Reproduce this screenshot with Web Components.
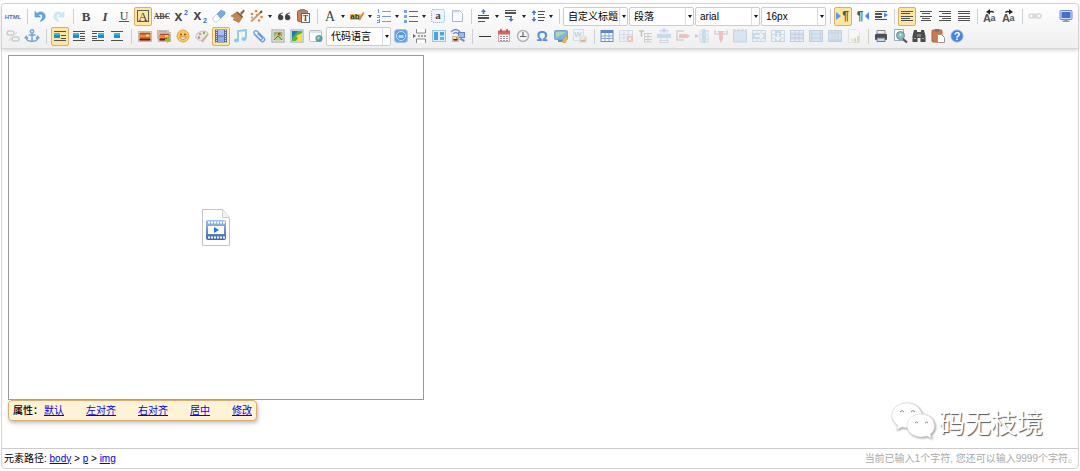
<!DOCTYPE html>
<html lang="zh">
<head>
<meta charset="utf-8">
<title>Editor</title>
<style>
html,body{margin:0;height:100%}
body{font:10px/16px "Liberation Sans","Noto Sans CJK SC",sans-serif;color:#000;background:#fff}
</style>
</head>
<body>
<rich-editor></rich-editor>
<script>
const T=(x,y,s,t,extra='')=>`<text x="${x}" y="${y}" font-size="${s}" ${extra}>${t}</text>`;
const SERIF='font-family="Liberation Serif" text-anchor="middle" fill="#444"';
const L=(rows,c='#505050')=>rows.map(([x,y,w,h=1])=>`<rect x="${x}" y="${y}" width="${w}" height="${h}" fill="${c}"/>`).join('');
const pic=(x,y,w=6,h=5)=>`<rect x="${x}" y="${y}" width="${w}" height="${h}" fill="#1590d8"/><rect x="${x}" y="${y}" width="${w}" height="2" fill="#3db4f0"/>`;
const photo=(x,y,w,h)=>`<rect x="${x+.5}" y="${y+.5}" width="${w-1}" height="${h-1}" fill="#fff" stroke="#c4bab6"/><rect x="${x+1.5}" y="${y+1.5}" width="${w-3}" height="${h-3}" fill="#b8481a"/><rect x="${x+1.5}" y="${y+h/2-2}" width="${w-3}" height="3" fill="#f58a2a"/><rect x="${x+w-6}" y="${y+h/2-2}" width="3" height="2" fill="#ffe08a"/><rect x="${x+1.5}" y="${y+h-3}" width="${w-3}" height="1.5" fill="#5c2413"/>`;
const up=(x,y)=>`<path d="M${x} ${y}l2.500 3h-1.700v2h-1.600v-2h-1.700z" fill="#4a78c8"/>`;
const down=(x,y)=>`<path d="M${x} ${y+5}l2.500-3h-1.700v-2h-1.600v2h-1.700z" fill="#4a78c8"/>`;
const grid=(hl='',c='#7fa6dc')=>`<rect x="1.5" y="2.5" width="13" height="11" fill="#e8f1fc" stroke="${c}"/>${hl}<path d="M2 6.5h12M2 10h12M6 3v10M10 3v10" stroke="${c}" fill="none"/>`;
const chain='<rect x="2" y="6" width="6" height="4" rx="2" fill="none" stroke="#888" stroke-width="1.500"/><rect x="8" y="6" width="6" height="4" rx="2" fill="none" stroke="#888" stroke-width="1.500"/><path d="M5 8h6" stroke="#888" stroke-width="1.500"/>';
const SANS='font-weight="bold" font-family="Liberation Sans" text-anchor="middle"';
const ICONS={
html:T(8,10.5,6,'HTML',SANS+' fill="#3f78b4"'),
undo:'<path d="M3 3.500v5.500h5.500L6.300 7C8 5.500 10.500 6 10.500 8.500c0 1.800-.8 3.200-2.300 4.700 3.600-.6 5.600-3.200 4.800-6.200C12 3.500 7.500 3 4.900 5.500z" fill="#5fa8e8" stroke="#3f88d4" stroke-width=".6"/>',
redo:'<path d="M13 3.500v5.500H7.500L9.700 7C8 5.500 5.500 6 5.500 8.500c0 1.800.8 3.200 2.300 4.700C4.200 12.600 2.200 10 3 7 4 3.500 8.500 3 11.100 5.500z" fill="#6fc0f0" stroke="#3fa0d4" stroke-width=".6"/>',
bold:T(8,12.5,13,'B',SERIF+' font-weight="bold"'),
italic:T(8,12.5,13,'I',SERIF+' font-weight="bold" font-style="italic"'),
underline:T(8,11.5,12,'U',SERIF)+L([[3,13,10]]),
box:'<rect x="2.500" y="2.500" width="11" height="11" fill="none" stroke="#59615c"/>'+T(8,12.5,13,'A',SERIF),
strike:T(8,11,8,'ABC',SERIF+' font-weight="bold"')+L([[1,8,14]]),
sup:T(5.5,13,14,'x',SANS+' fill="#444"')+T(13,7,7,'2',SANS+' fill="#3a69e0"'),
sub:T(5.5,12,14,'x',SANS+' fill="#444"')+T(13,15,7,'2',SANS+' fill="#3a69e0"'),
eraser:'<path d="M2 10L10 2l4 2v2L6 14H4l-2-2z" fill="#fff" stroke="#b7bec8" stroke-width=".7"/><path d="M6 6l4-4 4 2v2l-4.500 4.500z" fill="#78aae8" stroke="#6a94cc" stroke-width=".5"/>',
brush:'<path d="M10 5l3.500-3.500 1.500 1.500L11.500 7z" fill="#9a6a3e"/><path d="M1 8l6-4 5.500 5L9 14.500 3 11.500l2-1.500z" fill="#c08850" stroke="#a8703c" stroke-width=".7"/><path d="M7 4l5.500 5" stroke="#7e5429" stroke-width="1.500"/>',
wand:'<path d="M2 13.500L11 5" stroke="#cba070" stroke-width="2"/><path d="M11 5l2-2" stroke="#7a4d28" stroke-width="2"/><g fill="#f57a32"><circle cx="3" cy="6" r="1.300"/><circle cx="7" cy="3" r="1.300"/><circle cx="8" cy="7" r="1"/><circle cx="12.500" cy="9" r="1.300"/><circle cx="10" cy="12.500" r="1.200"/><circle cx="3" cy="9.500" r="1"/></g>',
quote:'<path d="M7 4.500C3 5 2 7 2 9.500a2.700 2.700 0 1 0 2.500-2.700C4.800 6 5.500 5.500 7 5.200zM14 4.500c-4 .5-5 2.500-5 5a2.700 2.700 0 1 0 2.500-2.700c.3-.8 1-1.300 2.500-1.600z" fill="#444"/>',
paste:'<rect x="2.500" y="2.500" width="10" height="11" rx="1" fill="#c8805a" stroke="#a86848"/><rect x="5" y="1" width="5" height="3" fill="#888"/><rect x="6.500" y="5.500" width="8" height="9" fill="#fff" stroke="#667"/>'+T(10.5,13,8,'T',SERIF+' font-weight="bold"'),
color:T(8,13,14,'A',SERIF),
mark:'<rect x="1" y="6" width="11" height="6" fill="#f9be60"/>'+T(6,11,8,'ab',SANS+' fill="#333"')+'<path d="M9 12l5-8 1.500 1-4.500 7.500z" fill="#c98a4b"/>',
ol:L([[6,3,9],[6,8,9],[6,13,9]],'#7a9ae0')+L([[2,1,1,4],[1,7,3],[1,9,3],[3,7,1,3],[1,12,3],[3,11,1,4],[1,14,3]],'#6f96e8'),
ul:L([[6,3,9],[6,8,9],[6,13,9]],'#666')+L([[1,2,3,3],[1,7,3,3],[1,12,3,3]],'#7c9fee'),
all:'<rect x="1.500" y="1.500" width="13" height="13" rx="2" fill="#edf4ff" stroke="#79a8ee" stroke-dasharray="1 1"/>'+T(8,11,11,'a',SERIF+' font-weight="bold"'),
page:'<path d="M3.500 2.500h7l3 3v8h-10z" fill="#fafcff" stroke="#aab8ca"/><path d="M3.500 2.500h7v2h-7z" fill="#ccd9e8"/>',
rowTop:up(7.5,1)+L([[2,7,11,1],[2,9,11,2],[2,13,7,1]]),
rowBot:L([[2,2,11,1],[2,4,11,2],[2,8,7,1]])+down(8,9),
line:up(4,2)+down(4,9)+L([[8,3,7],[8,6,6],[8,9,7],[8,12,6]]),
ltr:'<path d="M1 4l5 4-5 4z" fill="#5b98f0"/>'+T(10.5,12,12,'¶',SANS+' fill="#555"'),
rtl:'<path d="M15 4l-4 4 4 4z" fill="#4589f0"/>'+T(6,12,12,'¶',SANS+' fill="#555"'),
indent:L([[2,3,12],[2,5,7,2],[2,8,7,2],[2,11,12,1]])+'<path d="M11 7l-0-2.500 4 2.500-4 2.500z" fill="#4589f0"/>',
left:L([[2,3,12],[2,5,9],[2,8,12],[2,10,9],[2,12,12]]),
center:L([[2,3,12],[4,5,8],[2,8,12],[4,10,8],[3,12,10]]),
right:L([[2,3,12],[5,5,9],[2,8,12],[5,10,9],[2,12,12]]),
full:L([[2,3,12],[2,5,12],[2,8,12],[2,10,12],[2,12,12]]),
upper:T(5,14,11,'A',SANS+' fill="#555"')+T(11,13,9,'a',SANS+' fill="#555"')+'<path d="M4 4l4-3v2q4-1 4 2-2-1-4-.5v2z" fill="#222"/>',
lower:T(5,14,11,'A',SANS+' fill="#555"')+T(11,13,9,'a',SANS+' fill="#555"')+'<path d="M12 4L8 1v2q-4-1-4 2 2-1 4-.5v2z" fill="#222"/>',
link:chain,
unlink:'<rect x="2" y="3" width="7" height="4" rx="2" fill="none" stroke="#777" stroke-width="1.500"/><rect x="7" y="9" width="7" height="4" rx="2" fill="none" stroke="#777" stroke-width="1.500"/><path d="M4 13l2-4M10 7l2-3" stroke="#999"/>',
screen:'<rect x="2" y="2.500" width="12" height="9" rx="1" fill="#d8e4fa" stroke="#6c87c8"/><rect x="3.500" y="4" width="9" height="6" fill="#3f6ed4"/><path d="M6.500 11.500h3v1h2V14h-7v-1.500h2z" fill="#8d9bb8"/>',
anchor:'<g fill="none" stroke="#74a6d8" stroke-width="1.500"><circle cx="8" cy="3.500" r="1.700"/><path d="M8 5v9M4.500 7h7M2 9c.5 6 11.500 6 12 0M.8 10.500L2.200 8.500l1.800 2M12 10.500l1.800-2 1.500 2"/></g>',
imgL:L([[2,3,12],[9,7,5],[9,10,5],[2,12,12]])+pic(2,5,6,5),
imgWL:L([[2,3,12],[9,5,5],[9,8,5],[9,10,5],[2,12,12]])+pic(2,5),
imgWR:L([[2,3,12],[2,5,5],[2,8,5],[2,10,5],[2,12,12]])+pic(8,5),
imgC:L([[2,3,12],[2,12,12]])+pic(5,5,6,5),
image:photo(1,3,14,11),
images:photo(1,2,12,9)+photo(2,4,13,10)+'<path d="M9 11h2V9l4 3-4 3v-2H9z" fill="#7fcf1d"/>',
smile:'<circle cx="8" cy="8" r="6" fill="#ffc658" stroke="#eaa04a"/><circle cx="6" cy="6.500" r="1" fill="#8b4f13"/><circle cx="10" cy="6.500" r="1" fill="#8b4f13"/><path d="M4.500 9q3.500 5 7 0z" fill="#fff" stroke="#b67030" stroke-width=".7"/>',
palette:'<path d="M2 7C5 2 14 2 14 6c0 3-4 2-5 5s-6 1-7-1z" fill="#eee8dc" stroke="#c8beae"/><circle cx="6" cy="6" r="1.300" fill="#e79a5a"/><circle cx="10" cy="5" r="1.200" fill="#78b66f"/><circle cx="5" cy="9.500" r="1.200" fill="#7e98d6"/><path d="M8 14l6-8" stroke="#cdad7b" stroke-width="1.500"/>',
film:'<rect x="2" y="1.500" width="12" height="13" fill="#5a6aa0"/><rect x="5" y="2" width="6" height="5.500" fill="#a7bff2"/><rect x="5" y="8.500" width="6" height="5.500" fill="#8dabea"/><path d="M3.500 2v13M12.500 2v13" stroke="#dde" stroke-dasharray="1 1"/>',
music:'<path d="M6 12V3l8-1v8" fill="none" stroke="#8fc6ea" stroke-width="1.800"/><ellipse cx="4.500" cy="12.500" rx="2.500" ry="2" fill="#8ac9ee"/><ellipse cx="12" cy="11" rx="2.500" ry="2" fill="#8ac9ee"/>',
clip:'<path d="M3 6l7 7c2 2 5-1 3-3L6.500 3.500C4.500 1.500 1.500 4 3.500 6l5.500 5.500c1 1 3-.5 2-2L6.500 5.500" fill="none" stroke="#6c9ce6" stroke-width="1.300"/>',
map:'<rect x="2" y="2" width="12" height="12" fill="#fff" stroke="#999"/><rect x="3.500" y="3.500" width="9" height="9" fill="#8fb46c"/><path d="M4 9l4-5 5 6v2H4z" fill="#c5c985"/><circle cx="9" cy="6" r="1.500" fill="#d44030"/><path d="M4 12l4-4 4 4" stroke="#3f7f55" fill="none"/>',
gmap:'<rect x="2" y="2" width="12" height="12" fill="#fff" stroke="#8aa4c0"/><rect x="3" y="3" width="10" height="10" fill="#4cb840"/><path d="M3 3h6L3 10z" fill="#1379c9"/><path d="M13 5l-6 3 2 2-2 3h6z" fill="#ffe02d"/>',
frame:'<rect x="1.500" y="2.500" width="12" height="11" rx="1" fill="#fcfcfc" stroke="#b7c0ca"/><path d="M2 4h11" stroke="#bccbd9"/><circle cx="11" cy="10.500" r="3.500" fill="#5a9aa9"/><path d="M9 10l2-2 1 2-2 2z" fill="#bbdc8c"/>',
app:'<rect x="1.500" y="1.500" width="13" height="13" rx="3" fill="#6ba0e4" stroke="#9ec2ec"/><circle cx="8" cy="8" r="4.500" fill="#4f98e8" stroke="#c8e2ff"/><path d="M5.500 7h5v3h-5z" fill="#b9dcfa"/>',
pbreak:'<path d="M4.500 1v4h9V1M4.500 15v-4h9v4" fill="#fff" stroke="#888"/><path d="M6 8h9" stroke="#555" stroke-dasharray="2 1"/><path d="M1 6l3 2-3 2z" fill="#666"/>',
templ:'<rect x="1.500" y="2.500" width="13" height="11" fill="#d9efff" stroke="#a1c4e4"/><rect x="3" y="4" width="4" height="8" fill="#4aa4dd"/><rect x="9" y="4" width="4" height="3.500" fill="#4aa4dd"/><rect x="9" y="9" width="4" height="3" fill="#64b2e5"/>',
remote:'<path d="M1 4q5-5 9 0M3 6q3-3 5 0" fill="none" stroke="#738ac7" stroke-width="1.300"/><rect x="8.500" y="4.500" width="6" height="5" fill="#9dbbf0" stroke="#6583c1"/><path d="M9 11l5 3 1-2-4-2z" fill="#748cc2"/>'+photo(2,8,7,6),
hr:L([[2,8,12]],'#333'),
cal:'<rect x="2.500" y="3.500" width="11" height="10" fill="#fff" stroke="#caa"/><rect x="2" y="2.500" width="12" height="4" fill="#e2605a"/><path d="M5 1v3M11 1v3" stroke="#b24f4f" stroke-width="1.500"/><path d="M4 8.500h8M4 10.500h8M4 12.500h8" stroke="#999" stroke-dasharray="2 1"/>',
clock:'<circle cx="8" cy="8" r="5.500" fill="#f2f3f5" stroke="#b1b4b8" stroke-width="1.500"/><path d="M8 4v4.500h3.500M8 8.500H5" stroke="#666" fill="none" stroke-width="1.200"/>',
omega:T(8,13,14,'Ω',SANS+' fill="#4f8fe8"'),
snap:'<rect x="1.500" y="2.500" width="13" height="9" rx="1" fill="#79b6e8" stroke="#7aa4cc"/><path d="M3 10V4h10z" fill="#a8d8b4"/><path d="M5 13h5" stroke="#6f8ba5" stroke-width="2"/><path d="M9 14l3-6 3 1-3 6z" fill="#e5b84d" stroke="#bb9650" stroke-width=".6"/>',
word:'<rect x="1.500" y="1.500" width="10" height="11" fill="#eaf3ff" stroke="#8eb0d8"/>'+T(6,9,8,'W',SANS+' fill="#3f80d0"')+photo(7,8,8,7),
table:'<rect x="2" y="2.500" width="12" height="11" fill="#fff" stroke="#6d8ec8"/><rect x="2" y="2" width="12" height="3" fill="#5a88d4"/><path d="M2 8h12M2 10.500h12M6 5v8M10 5v8" stroke="#87a7d8"/>',
tdel:grid()+'<rect x="9" y="8" width="6" height="6" fill="#e54c4c"/><path d="M10.500 9.500l3 3m0-3l-3 3" stroke="#fff"/>',
tpar:'<path d="M2 3h5M4.500 3v6" stroke="#555" stroke-width="1.500"/><path d="M7 5.500h8M7 8.500h8M7 11.500h8M7 14h8M7.500 5v9M11 5v9" stroke="#777"/>',
rowIn:'<rect x="1" y="6" width="14" height="4" fill="#58a8f0"/><path d="M3 12.500h10M3 14.500h10M5 1v14M11 1v14M3 3h10" stroke="#90a4be"/>'+up(8,0),
rowDel:'<path d="M1 3h8M1 12h8M2 3v9" stroke="#888" stroke-width="1.500"/><rect x="4" y="6" width="8" height="4" fill="#e35050"/><path d="M15 8l-3-2v4z" fill="#e35050"/>',
colIn:'<rect x="8" y="1" width="4" height="14" fill="#58a8f0"/><path d="M6 3h9M6 7h9M6 11h9M6 14h9M6 2v12M14 2v12" stroke="#90a4be"/><path d="M1 6l4 2-4 2z" fill="#4a78c8"/>',
colDel:'<path d="M2 2v4h4M14 2v4h-4" stroke="#888" fill="none" stroke-width="1.500"/><rect x="6" y="5" width="4" height="6" fill="#e35050"/><path d="M8 15l-2-4h4zM4 3l4 4 4-4" fill="#e35050"/>',
cells:'<rect x="1.500" y="3" width="13" height="11" fill="#9cc4f2" stroke="#678fd0"/><path d="M1 2h14" stroke="#456fba" stroke-dasharray="3 1"/>',
mright:grid('<rect x="2" y="5" width="12" height="6" fill="#5ba3ea"/>','#6f9acb')+'<path d="M4 8h6M9 5.500L12 8l-3 2.500" stroke="#fff" stroke-width="1.500" fill="none"/>',
mdown:grid('<rect x="5" y="3" width="6" height="10" fill="#5ba3ea"/>','#6f9acb')+'<path d="M8 5v5M5.500 9L8 12l2.500-3" stroke="#fff" stroke-width="1.500" fill="none"/>',
split:grid('<rect x="2" y="4" width="12" height="8" fill="#a7b8ec"/>','#5277b8'),
splitR:'<rect x="1.500" y="2.500" width="13" height="11" fill="#94c7f6" stroke="#527fb5"/><path d="M2 6h12M2 10h12M4 3v11M12 3v11" stroke="#527fb5"/>',
splitC:'<rect x="1.500" y="2.500" width="13" height="11" fill="#94c7f6" stroke="#527fb5"/><path d="M5 3v11M8 3v11M11 3v11M2 5h12M2 12h12" stroke="#527fb5"/>',
chart:'<path d="M2.500 1.500h8l3 3v10h-11z" fill="#fff" stroke="#bbb"/><path d="M8 14v-4h2v4zM11 14V8h2v6z" fill="#86b33b"/><path d="M5 13v-2h2v2z" fill="#e8b347"/>',
print:'<path d="M4 2.500h8V6H4z" fill="#eee" stroke="#888"/><rect x="2" y="6" width="12" height="6" rx="1" fill="#4a4d54"/><path d="M4 10h8v3.500H4z" fill="#c1dff4" stroke="#777"/>',
preview:'<path d="M2.500 1.500h9v11h-9z" fill="#fff" stroke="#9ab"/><circle cx="8.500" cy="7.500" r="4" fill="#79bfc8" stroke="#6f89a3"/><path d="M7 6l2-1 1 2-2 2z" fill="#c7e68e"/><path d="M11 11l4 3.500" stroke="#5b4a43" stroke-width="2"/>',
find:'<path d="M3 2h3v2h4V2h3l1.500 6v6H9.500v-4h-3v4h-5V8z" fill="#4b4b4b"/><path d="M3 10.500h2M11 10.500h2M7 6v3M9 6v3" stroke="#aaa"/>',
draft:'<rect x="2" y="2" width="10" height="12" rx="1" fill="#cc7a4c" stroke="#a96340"/><rect x="5" y="1" width="4" height="3" fill="#777"/><path d="M7.500 6.500h4l3 3v5h-7z" fill="#fff" stroke="#999"/>',
help:'<circle cx="8" cy="8" r="6" fill="#4682ea" stroke="#7cacf5"/>'+T(8,12,11,'?',SANS+' fill="#fff"')
};

class ToolButton extends HTMLElement{
 connectedCallback(){
  const off=this.hasAttribute('off'),menu=this.hasAttribute('menu');
  this.attachShadow({mode:'open'}).innerHTML=`<style>
  :host{display:flex;flex:none;margin-right:1px}
  button{display:flex;align-items:flex-start;justify-content:center;width:18px;height:19px;margin:0;padding:0;border:1px solid transparent;border-radius:2px;background:none}
  :host([on]) button{border-color:#dcac6c;background:#ffe69f}
  :host([off]) svg{opacity:.3}
  svg{flex:none;width:16px;height:16px}
  .arrow{width:8px;align-items:center}
  i{border:2px solid transparent;border-top:3px solid #222;border-bottom:0}
  </style><button aria-label="${this.getAttribute('icon')}" ${off?'disabled':''}><svg viewBox="0 0 16 16">${ICONS[this.getAttribute('icon')]}</svg></button>${menu?'<button class="arrow" aria-label="menu"><i></i></button>':''}`;
 }
}
customElements.define('tool-button',ToolButton);

class ToolSep extends HTMLElement{
 connectedCallback(){this.attachShadow({mode:'open'}).innerHTML=`<style>:host{display:flex;flex:none;justify-content:center;align-items:center;width:var(--sep,8px);height:19px}i{width:1px;height:15px;background:#cfcfcf}</style><i></i>`;}
}
customElements.define('tool-sep',ToolSep);

class ToolCombo extends HTMLElement{
 connectedCallback(){this.attachShadow({mode:'open'}).innerHTML=`<style>
 :host{display:grid;flex:none;width:65px;height:19px;margin-right:1px;box-sizing:border-box;border:1px solid #ccc;border-radius:2px;background:#fff;grid-template-columns:1fr 8px}
 select{grid-area:1/1/2/3;appearance:none;width:100%;border:0;margin:0;padding:0 0 0 4px;background:none;font:inherit;color:#000;outline:0}
 span{grid-area:1/2;display:flex;align-items:center;justify-content:center;border-left:1px solid #ddd;pointer-events:none}
 i{border:2px solid transparent;border-top:3px solid #111;border-bottom:0}
 </style><select aria-label="${this.getAttribute('value')}"><option>${this.getAttribute('value')}</option></select><span><i></i></span>`;}
}
customElements.define('tool-combo',ToolCombo);

class EditorToolbar extends HTMLElement{
 connectedCallback(){
  const build=s=>s.trim().split(/\s+/).map(n=>{
   if(n==='|')return '<tool-sep></tool-sep>';
   if(n[0]==='=')return `<tool-combo value="${n.slice(1)}"></tool-combo>`;
   if(n==='>')return '<span></span>';
   const [name,f]=n.split(':');
   return `<tool-button icon="${name}" ${f||''}></tool-button>`;
  }).join('');
  this.attachShadow({mode:'open'}).innerHTML=`<style>
  :host{display:flex;flex-direction:column;gap:1px;padding:3px 2px 2px 2px;background:linear-gradient(#fff,#efefef);border-bottom:1px solid #d4d4d4;border-radius:4px 4px 0 0;box-shadow:0 1px 4px #ccc}
  .row,.part{display:flex}
  .part:last-child{flex:1}
  span{flex:1}
  .r1a{--sep:8px}.r1b{--sep:7px}.r2a{--sep:9px}.r2b{--sep:8px}
  </style>
  <div class="row"><div class="part r1a">${build('html | undo redo:off | bold italic underline box:on strike sup sub eraser brush wand:menu quote paste | color:menu mark:menu ol:menu ul:menu all page | rowTop:menu rowBot:menu line:menu')}</div>
  <div class="part r1b">${build('| =自定义标题 =段落 =arial =16px | ltr:on rtl indent | left:on center right full | upper lower | link:off > screen')}</div></div>
  <div class="row"><div class="part r2a">${build('unlink:off anchor | imgL:on imgWL imgWR imgC | image images smile palette film:on music clip map gmap frame =代码语言')}</div>
  <div class="part r2b">${build('app pbreak templ remote | hr cal clock omega snap word:off | table tdel:off tpar:off rowIn:off rowDel:off colIn:off colDel:off cells:off mright:off mdown:off split:off splitR:off splitC:off chart:off | print preview find draft help')}</div></div>`;
 }
}
customElements.define('editor-toolbar',EditorToolbar);

class VideoBox extends HTMLElement{
 connectedCallback(){this.attachShadow({mode:'open'}).innerHTML=`<style>
 :host{display:flex;align-items:center;justify-content:center;box-sizing:border-box;width:416px;max-width:100%;aspect-ratio:416/345;border:1px solid #999}
 svg{width:30px;height:38px}</style>
 <svg viewBox="0 0 30 38"><defs><linearGradient id="g" x2="0" y2="1"><stop stop-color="#9ec4e4"/><stop offset="1" stop-color="#3c63b4"/></linearGradient></defs>
 <path d="M1.500 .5h20l7 8v28h-27z" fill="#fff" stroke="#c4c4c4"/><path d="M21.500 .5v8h7" fill="#f2f2f2" stroke="#ccc"/>
 <rect x="5" y="11" width="20" height="20" rx="2" fill="url(#g)"/><path d="M7 13.500h17M7 28.500h17" stroke="#fff" stroke-width="2" stroke-dasharray="2 1"/><rect x="7" y="17" width="16" height="8" fill="#fff"/><path d="M13 18l5 3-5 3z" fill="#2376d8"/></svg>`;}
}
customElements.define('video-box',VideoBox);

class PropertyPopup extends HTMLElement{
 connectedCallback(){this.attachShadow({mode:'open'}).innerHTML=`<style>
 :host{display:flex;align-items:center;width:max-content;box-sizing:border-box;height:21px;padding:0 4px;border:1px solid #dcac6c;border-radius:4px;background:#fff3d6;box-shadow:1px 2px 4px #bbb}
 nav{display:flex;gap:22px;margin-left:1px}a{color:#00f}b{font-weight:500}</style>
 <b>属性：</b><nav><a href="#">默认</a><a href="#">左对齐</a><a href="#">右对齐</a><a href="#">居中</a><a href="#">修改</a></nav>`;}
}
customElements.define('property-popup',PropertyPopup);

class StatusBar extends HTMLElement{
 connectedCallback(){this.attachShadow({mode:'open'}).innerHTML=`<style>
 :host{display:flex;align-items:center;justify-content:space-between;height:19px;padding:0 0 0 2px;border-top:1px solid #ccc}
 a{color:#00f}.count{color:#aaa}</style>
 <div>元素路径: <a href="#">body</a> &gt; <a href="#">p</a> &gt; <a href="#">img</a></div><div class="count">当前已输入1个字符, 您还可以输入9999个字符。</div>`;}
}
customElements.define('status-bar',StatusBar);

class WaterMark extends HTMLElement{
 connectedCallback(){this.attachShadow({mode:'open'}).innerHTML=`<style>
 :host{display:flex;align-items:center;gap:4px;font:26px/32px "Noto Sans CJK SC",sans-serif;color:#fff;text-shadow:1px 1px 1px #555}
 svg{width:44px;height:40px;filter:drop-shadow(1px 1px 1px #999)}</style>
 <svg viewBox="0 0 44 40"><path d="M16 1C7 1 1 6.500 1 13.500c0 4 2 7.500 6 10L5.500 28l5.500-3q3 1 7 1c7-1 14-6 13-13C30 6 24 1 16 1z" fill="#fff" stroke="#ccc" stroke-width=".5"/><path d="M30 12c-8 0-14 5-14 11.500S22 35 30 35q3 0 6-1l4.500 2.500L39.500 32c3-2 4.500-5 4-9-.5-6-6-11-13.500-11z" fill="#fff" stroke="#ccc" stroke-width=".5"/><g fill="none" stroke="#888"><path d="M9 10q2-3 4 0M20 10q2-3 4 0M24 21q1.500-2 3 0M34 21q1.500-2 3 0"/></g></svg><span>码无枝境</span>`;}
}
customElements.define('water-mark',WaterMark);

class RichEditor extends HTMLElement{
 connectedCallback(){this.attachShadow({mode:'open'}).innerHTML=`<style>
 :host{display:flex;box-sizing:border-box;min-height:100vh;padding:3px 1px 2px}
 section{flex:1;display:flex;flex-direction:column;position:relative;border:1px solid #d4d4d4;border-radius:4px}
 main{flex:1;padding:6px 6px 0}
 water-mark{position:absolute;right:35px;bottom:26px}
 </style><section><editor-toolbar></editor-toolbar><main><video-box></video-box><property-popup></property-popup></main><status-bar></status-bar><water-mark></water-mark></section>`;}
}
customElements.define('rich-editor',RichEditor);
</script>
</body>
</html>
